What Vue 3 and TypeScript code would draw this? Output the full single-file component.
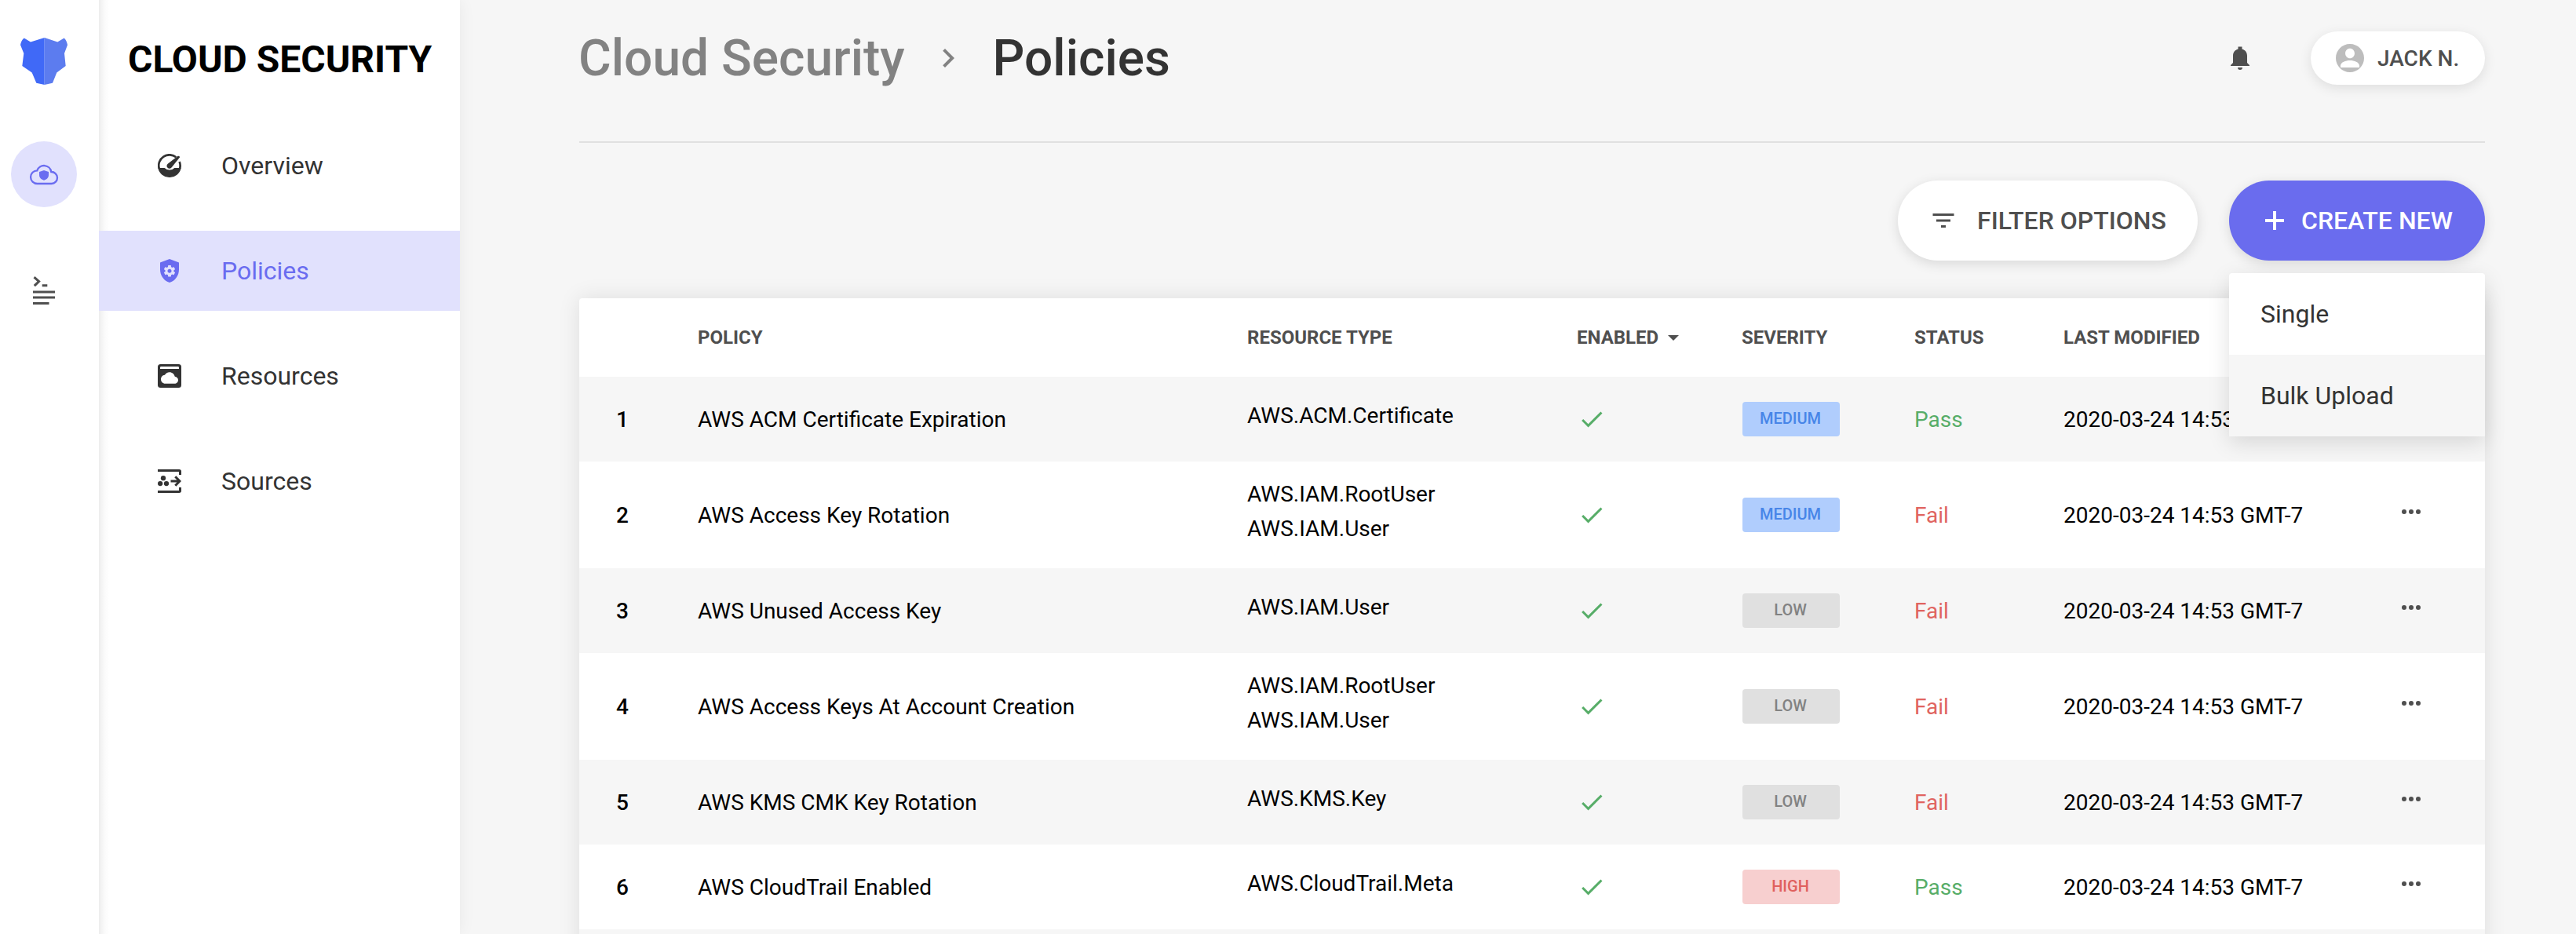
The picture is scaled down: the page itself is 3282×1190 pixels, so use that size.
<script setup lang="ts">
type Severity = 'MEDIUM' | 'LOW' | 'HIGH'
type Status = 'Pass' | 'Fail'

interface Policy {
  id: number
  name: string
  resources: string[]
  severity: Severity
  status: Status
}

const policies: Policy[] = [
  { id: 1, name: 'AWS ACM Certificate Expiration', resources: ['AWS.ACM.Certificate'], severity: 'MEDIUM', status: 'Pass' },
  { id: 2, name: 'AWS Access Key Rotation', resources: ['AWS.IAM.RootUser', 'AWS.IAM.User'], severity: 'MEDIUM', status: 'Fail' },
  { id: 3, name: 'AWS Unused Access Key', resources: ['AWS.IAM.User'], severity: 'LOW', status: 'Fail' },
  { id: 4, name: 'AWS Access Keys At Account Creation', resources: ['AWS.IAM.RootUser', 'AWS.IAM.User'], severity: 'LOW', status: 'Fail' },
  { id: 5, name: 'AWS KMS CMK Key Rotation', resources: ['AWS.KMS.Key'], severity: 'LOW', status: 'Fail' },
  { id: 6, name: 'AWS CloudTrail Enabled', resources: ['AWS.CloudTrail.Meta'], severity: 'HIGH', status: 'Pass' },
]
const modified = '2020-03-24 14:53 GMT-7'
const navItems = ['Overview', 'Policies', 'Resources', 'Sources']
</script>

<template>
  <div class="app">
    <aside class="rail">
      <svg class="logo" width="60" height="60" viewBox="0 0 60 60">
        <path fill="#4069f7" d="M30.7 0 13 5.4 4.7.4C2 2.600.4 6 0 9.200L4.300 20 2.300 36l12.400 8.400 5.600 13.400L30.700 60z" />
        <path fill="#5c7cef" d="M30.700 0 47.300 5.400 55.700.4C58 2.600 59.600 6 60 9.200L56 20l1.700 16-11.400 8.400L41 57.800 30.700 60z" />
      </svg>
      <div class="rail-active">
        <svg width="36" height="26" viewBox="0 0 36 26" overflow="visible">
          <path fill="none" stroke="#6a6cf0" stroke-width="2.3" d="M9.500 25A8.350 8.350 0 0 1 9.300 8.300A9.300 9.300 0 0 1 27.300 10A7.500 7.500 0 0 1 27.700 25Z" />
          <path fill="#6a6cf0" d="M18 8l6 2v4c0 3.500-3 6-6 6.700-3-.7-6-3.200-6-6.700v-4z" />
        </svg>
      </div>
      <svg class="rail-code" width="28" height="36" viewBox="0 0 28 36">
        <path fill="none" stroke="#4f4f4f" stroke-width="3" d="M1.500 1.200 7.600 6.600 1.800 12.200" />
        <path fill="#4f4f4f" d="M11.700 10.300h6.600v3h-6.600zM0 18.500h28v3H0zM0 25.600h28v3H0zM0 32.900h20.500v3H0z" />
      </svg>
    </aside>

    <nav class="nav">
      <h2>CLOUD SECURITY</h2>
      <a v-for="item in navItems" :key="item" class="nav-item" :class="{ active: item === 'Policies' }">
        <svg v-if="item === 'Overview'" width="30" height="30" viewBox="0 0 30 30">
          <path fill="currentColor" d="M.3 18h8.400A8.900 8.900 0 0 0 21.300 18H29.700A15 15 0 0 1 .3 18z" />
          <path fill="none" stroke="currentColor" stroke-width="2.700" d="M1.700 18.500A13.650 13.650 0 0 1 23.300 4.200M27.600 9.900A13.650 13.650 0 0 1 28.200 18.500" />
          <path fill="currentColor" d="M12.700 12.700 25.600 2.800Q27.300 2.400 28.200 4.200L17.700 17.200A3.400 3.400 0 1 1 12.700 12.700z" />
        </svg>
        <svg v-else-if="item === 'Policies'" width="30" height="30" viewBox="-3 0 30 30">
          <path fill="currentColor" d="M12 0l12 4.500v9C24 21 19 28 12 30 5 28 0 21 0 13.500v-9z" />
          <path fill="#e1e1fd" transform="translate(3.300 6.500) scale(.725)" d="M19.430 12.980c.04-.32.070-.64.070-.98s-.03-.66-.07-.98l2.110-1.650c.19-.15.24-.42.120-.64l-2-3.460c-.12-.22-.39-.3-.61-.22l-2.490 1c-.52-.4-1.080-.73-1.690-.98l-.38-2.650C14.460 2.180 14.250 2 14 2h-4c-.25 0-.46.18-.49.42l-.38 2.650c-.61.25-1.170.59-1.690.98l-2.490-1c-.23-.09-.49 0-.61.22l-2 3.460c-.13.22-.07.49.12.64l2.110 1.650c-.04.32-.07.65-.07.98s.03.66.070.98l-2.110 1.650c-.19.15-.24.42-.12.64l2 3.460c.12.22.39.3.61.22l2.490-1c.52.4 1.080.73 1.690.98l.38 2.650c.03.24.24.42.49.42h4c.25 0 .46-.18.49-.42l.38-2.650c.61-.25 1.170-.59 1.690-.98l2.490 1c.23.09.49 0 .61-.22l2-3.460c.12-.22.070-.49-.12-.64l-2.110-1.650zM12 15.500c-1.930 0-3.500-1.570-3.500-3.500s1.570-3.500 3.500-3.500 3.500 1.570 3.500 3.500-1.570 3.500-3.500 3.500z" />
        </svg>
        <svg v-else-if="item === 'Resources'" width="30" height="30" viewBox="0 0 30 30">
          <rect fill="currentColor" width="30" height="30" rx="3.500" />
          <path fill="#fff" d="M4.200 3h21.600Q27 3 27 4.200V6H3V4.200Q3 3 4.200 3z" />
          <path fill="#fff" transform="translate(4 6.500) scale(.917)" d="M19.350 10.040C18.670 6.590 15.640 4 12 4 9.110 4 6.600 5.640 5.350 8.040 2.340 8.360 0 10.910 0 14c0 3.310 2.690 6 6 6h13c2.760 0 5-2.240 5-5 0-2.640-2.050-4.780-4.650-4.960z" />
        </svg>
        <svg v-else width="30" height="30" viewBox="0 0 30 30">
          <path fill="none" stroke="currentColor" stroke-width="3" d="M0 1.500H27.300Q28.500 1.500 28.500 2.700V7M0 28.500H27.300Q28.500 28.500 28.500 27.300V23M16.500 15H27.500M22.300 9.300 28 15 22.300 20.700" />
          <circle cx="7" cy="11.200" r="3.150" fill="currentColor" />
          <circle cx="3.150" cy="18.100" r="3.150" fill="currentColor" />
          <circle cx="11" cy="18.100" r="3.150" fill="currentColor" />
        </svg>
        <span>{{ item }}</span>
      </a>
    </nav>

    <main class="main">
      <header class="header">
        <div class="crumbs">
          <span class="parent">Cloud Security</span>
          <svg width="48" height="48" viewBox="0 0 24 24"><path fill="#828282" d="M10 6L8.590 7.410 13.170 12l-4.580 4.590L10 18l6-6z" /></svg>
          <span>Policies</span>
        </div>
        <div class="account">
          <svg width="24" height="30" viewBox="0 0 24 30"><path fill="#4f4f4f" d="M9.500.6h5v3C18.500 4.700 21 8 21 12v9l3 3v1H0v-1l3-3v-9c0-4 2.500-7.300 6.500-8.400zM9 27h6a3 3 0 0 1-6 0z" /></svg>
          <div class="user">
            <svg width="36" height="36" viewBox="2 2 20 20"><path fill="#bdbdbd" d="M12 2C6.480 2 2 6.480 2 12s4.480 10 10 10 10-4.480 10-10S17.520 2 12 2zm0 3.200c1.800 0 3.300 1.500 3.300 3.400S13.800 12.100 12 12.100 8.700 10.500 8.700 8.600 10.200 5.200 12 5.200zM5.300 18.600v-1.300C5.600 15 8.800 13.700 12 13.700s6.400 1.300 6.700 3.600v1.300z" /></svg>
            <span>JACK N.</span>
          </div>
        </div>
      </header>

      <div class="actions">
        <button class="btn filter">
          <svg width="36" height="36" viewBox="0 0 24 24"><path fill="#4f4f4f" d="M10 18h4v-2h-4v2zM3 6v2h18V6H3zm3 7h12v-2H6v2z" /></svg>
          <span>FILTER OPTIONS</span>
        </button>
        <div class="create-wrap">
          <button class="btn create">
            <svg width="24" height="24" viewBox="0 0 24 24"><path fill="#fff" d="M10 0h4v10h10v4H14v10h-4V14H0v-4h10z" /></svg>
            <span>CREATE NEW</span>
          </button>
          <div class="menu">
            <div class="menu-item">Single</div>
            <div class="menu-item hovered">Bulk Upload</div>
          </div>
        </div>
      </div>

      <section class="table">
        <div class="row head">
          <span></span>
          <span>POLICY</span>
          <span>RESOURCE TYPE</span>
          <span class="sorted">ENABLED<i class="caret"></i></span>
          <span>SEVERITY</span>
          <span>STATUS</span>
          <span>LAST MODIFIED</span>
          <span></span>
        </div>
        <div v-for="p in policies" :key="p.id" class="row">
          <b class="num">{{ p.id }}</b>
          <span>{{ p.name }}</span>
          <div>
            <div v-for="r in p.resources" :key="r" class="resource">{{ r }}</div>
          </div>
          <svg class="check" width="36" height="36" viewBox="0 0 24 24"><path fill="#57ad68" d="M9 16.170L4.830 12l-1.420 1.410L9 19 21 7l-1.410-1.410z" /></svg>
          <span class="badge" :class="p.severity.toLowerCase()">{{ p.severity }}</span>
          <span :class="p.status.toLowerCase()">{{ p.status }}</span>
          <span>{{ modified }}</span>
          <svg class="more" width="36" height="36" viewBox="0 0 24 24">
            <circle v-for="x in [6, 12, 18]" :key="x" :cx="x" cy="12" r="2" fill="#4f4f4f" />
          </svg>
        </div>
        <div class="row"></div>
      </section>
    </main>
  </div>
</template>

<style>
body { background: #f6f6f6; overflow: hidden; }
</style>

<style scoped>
.app {
  display: flex;
  width: 3282px;
  height: 1190px;
  overflow: hidden;
  background: #f6f6f6;
  font-family: Roboto, sans-serif;
  color: #000;
}
.app * { box-sizing: border-box; }
svg { display: block; flex: none; }

.rail {
  position: relative;
  z-index: 1;
  width: 126px;
  flex: none;
  background: #fff;
}
.logo { margin: 48px 0 0 26px; }
.rail-active {
  width: 84px;
  height: 84px;
  margin: 72px 0 0 14px;
  border-radius: 50%;
  background: #e1e1fd;
  display: flex;
  align-items: center;
  justify-content: center;
}
.rail-code { margin: 88px 0 0 42px; }

.nav {
  width: 460px;
  flex: none;
  background: linear-gradient(to right, #ededed 0, #f5f5f5 4px, #fbfbfb 8px, #fff 13px);
  box-shadow: 0 0 20px rgba(0, 0, 0, .06);
}
h2 {
  margin: 0;
  height: 160px;
  padding: 44px 0 0 37px;
  font-size: 48px;
  line-height: 64px;
  font-weight: 700;
  white-space: nowrap;
}
.nav-item {
  display: flex;
  align-items: center;
  height: 102px;
  margin-bottom: 32px;
  padding-left: 75px;
  font-size: 32px;
  color: #333;
}
.nav-item span { margin-left: 51px; }
.nav-item.active { background: #e1e1fd; color: #6a6cf0; }

.main { width: 2428px; margin-left: 152px; }
.header {
  height: 182px;
  border-bottom: 2px solid #e0e0e0;
  display: flex;
  justify-content: space-between;
  align-items: flex-start;
}
.crumbs {
  display: flex;
  align-items: center;
  height: 148px;
  font-size: 64px;
  font-weight: 500;
  color: #333;
}
.crumbs .parent { color: #828282; margin-left: -1px; }
.crumbs svg { margin: 0 33px 0 31px; }
.account { display: flex; align-items: center; height: 148px; }
.user {
  width: 222px;
  height: 68px;
  margin-left: 78px;
  padding-left: 32px;
  border-radius: 34px;
  background: #fff;
  box-shadow: 0 4px 16px rgba(0, 0, 0, .1);
  display: flex;
  align-items: center;
  gap: 17px;
  font-size: 28px;
  font-weight: 500;
  color: #4f4f4f;
}

.actions {
  display: flex;
  justify-content: flex-end;
  gap: 40px;
  margin-top: 48px;
}
.btn {
  height: 102px;
  border: 0;
  border-radius: 51px;
  display: flex;
  align-items: center;
  font: 500 32px Roboto, sans-serif;
  white-space: nowrap;
  box-shadow: 0 4px 16px rgba(0, 0, 0, .12);
}
.filter { width: 382px; padding: 0 0 0 40px; gap: 25px; background: #fff; color: #4f4f4f; }
.create { width: 326px; padding: 0 0 0 46px; gap: 22px; background: #6a6cee; color: #fff; }
.create-wrap { position: relative; }
.menu {
  position: absolute;
  top: 118px;
  right: 0;
  width: 326px;
  z-index: 2;
  overflow: hidden;
  border-radius: 4px 4px 0 0;
  background: #fff;
  box-shadow: 0 8px 28px rgba(0, 0, 0, .13);
}
.menu-item { padding-left: 40px; font-size: 32px; line-height: 104px; color: #333; }
.menu-item.hovered { background: #f6f6f6; }

.table {
  margin-top: 48px;
  border-radius: 4px;
  overflow: hidden;
  background: #fff;
  box-shadow: 0 0 28px rgba(0, 0, 0, .1);
}
.row {
  display: grid;
  grid-template-columns: 104px 700px 420px 210px 220px 190px 407px 60px;
  align-items: center;
  min-height: 108px;
  padding: 24px 0 24px 47px;
  font-size: 28px;
  white-space: nowrap;
}
.row:nth-child(even) { background: #f6f6f6; }
.row.head {
  min-height: 0;
  height: 100px;
  padding-block: 0;
  font-size: 24px;
  font-weight: 700;
  color: #4f4f4f;
}
.num { font-weight: 500; }
.resource { line-height: 36px; margin-bottom: 8px; }
.sorted { display: flex; align-items: center; }
.caret {
  margin: 1px 0 0 12px;
  border: 7.500px solid transparent;
  border-top-color: #4f4f4f;
  border-bottom: 0;
}
.check { margin-left: 1px; }
.badge {
  width: 124px;
  height: 44px;
  margin: -8px 0 -8px 1px;
  padding-right: 2px;
  border-radius: 4px;
  font-size: 20px;
  line-height: 43px;
  font-weight: 500;
  text-align: center;
}
.medium { background: #b0cdfd; color: #4785e8; }
.low { background: #e0e0e0; color: #828282; }
.high { background: #f7cfcf; color: #e0605e; }
.pass { color: #57ad68; }
.fail { color: #e06460; }
.more { margin: 0 0 8px 18px; }
</style>
